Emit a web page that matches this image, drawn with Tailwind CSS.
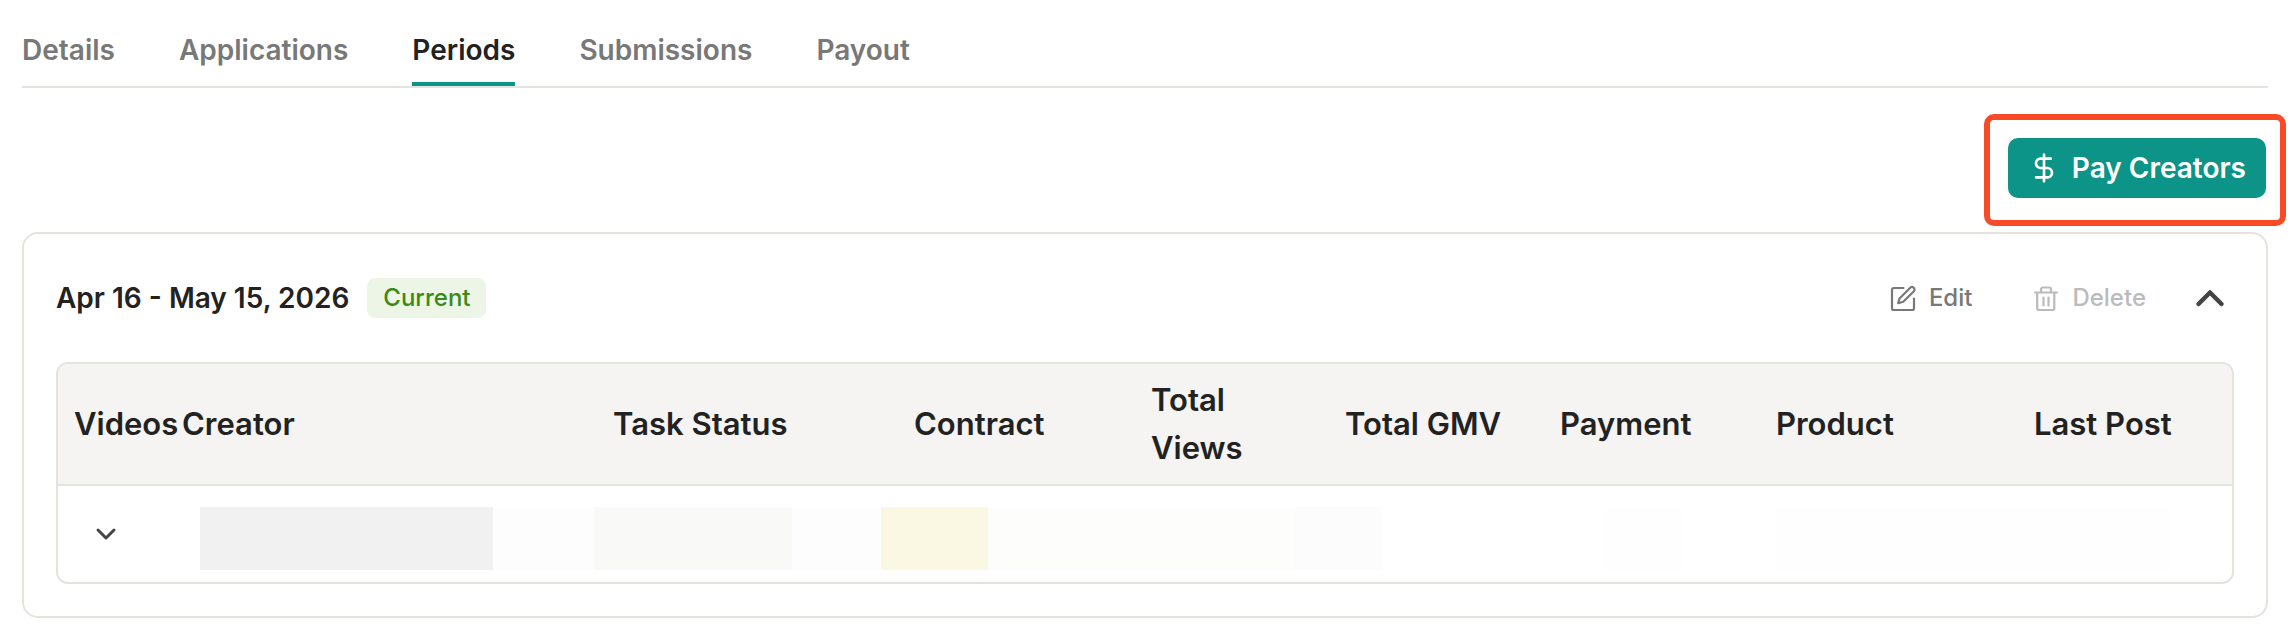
<!DOCTYPE html>
<html lang="en">
  <head>
    <meta charset="UTF-8" />
    <meta name="viewport" content="width=device-width, initial-scale=1.0" />
    <title>Campaign periods</title>
    <script src="https://cdn.jsdelivr.net/npm/@tailwindcss/browser@4"></script>
  </head>
  <body class="bg-white font-['Inter',sans-serif] text-[#222222]">
    <main class="pr-6 pl-[22px]">
      <!-- Tabs -->
      <nav class="flex gap-16 border-b-2 border-[#e4e4df] pt-[30px] text-[28px] leading-10 font-semibold text-[#787878]">
        <a href="#details" class="pb-4">Details</a>
        <a href="#applications" class="pb-4">Applications</a>
        <a href="#periods" aria-current="page" class="border-b-4 border-[#0d9488] pb-3 text-[#222222]">Periods</a>
        <a href="#submissions" class="pb-4">Submissions</a>
        <a href="#payout" class="pb-4">Payout</a>
      </nav>

      <!-- Actions -->
      <div class="flex justify-end pt-[50px] pr-[2px]">
        <div class="relative">
          <button type="button" class="flex h-[60px] items-center gap-3 rounded-[10px] bg-[#0d9488] px-5 text-[28px] font-semibold text-white">
            <svg class="size-8" viewBox="0 0 24 24" fill="none" stroke="currentColor" stroke-width="2" stroke-linecap="round" stroke-linejoin="round" aria-hidden="true">
              <path d="M12 2v20M17 5H9.5a3.5 3.5 0 0 0 0 7h5a3.5 3.5 0 0 1 0 7H6" />
            </svg>
            Pay Creators
          </button>
          <!-- highlight ring -->
          <span class="pointer-events-none absolute -top-6 -right-5 -bottom-7 -left-6 rounded-[10px] border-6 border-[#f84a27]"></span>
        </div>
      </div>

      <!-- Period card -->
      <section class="mt-[34px] rounded-2xl border-2 border-[#e4e4df] px-8 pb-8">
        <div class="flex h-32 items-center">
          <h2 class="text-[28px] font-semibold">Apr 16 - May 15, 2026</h2>
          <span class="ml-[18px] flex h-10 items-center rounded-lg bg-[#edf6e6] px-4 text-2xl font-medium text-[#3b8a12]">Current</span>
          <div class="ml-auto flex items-center text-2xl font-medium">
            <button type="button" class="flex items-center gap-3 text-[#787878]">
              <svg class="size-7" viewBox="0 0 28 28" fill="none" stroke="currentColor" stroke-width="2.2" stroke-linecap="round" stroke-linejoin="round" aria-hidden="true">
                <path d="M14.500 4H4.800A1.800 1.800 0 0 0 3 5.800v18.400A1.800 1.800 0 0 0 4.800 26h18.400a1.800 1.800 0 0 0 1.800-1.800V14.500" />
                <path d="M9.200 19.200 10.500 14.500 21 4a2.450 2.450 0 0 1 3.900 3.200L14.200 17.800Z" />
              </svg>
              Edit
            </button>
            <button type="button" disabled class="ml-[60px] flex items-center gap-3 text-[#bbbbbb]">
              <svg class="size-7" viewBox="0 0 28 28" fill="none" stroke="currentColor" stroke-width="2.2" stroke-linecap="round" stroke-linejoin="round" aria-hidden="true">
                <path d="M3 8.500h22M5.200 8.500v15.700A1.800 1.800 0 0 0 7 26h13.500a1.800 1.800 0 0 0 1.800-1.800V8.500M9 8.500V5.300A1.800 1.800 0 0 1 10.800 3.500h6.400A1.800 1.800 0 0 1 19 5.300v3.200M11.500 13.500v8M16.500 13.500v8" />
              </svg>
              Delete
            </button>
            <button type="button" aria-label="Collapse period" class="mr-2 ml-12 text-[#444444]">
              <svg class="size-8" viewBox="0 0 32 32" fill="none" stroke="currentColor" stroke-width="4.5" stroke-linecap="round" stroke-linejoin="round" aria-hidden="true">
                <path d="M4.500 22 16 10.500 27.500 22" />
              </svg>
            </button>
          </div>
        </div>

        <div class="overflow-hidden rounded-xl border-2 border-[#e4e4df]">
          <table class="w-full table-fixed text-left">
            <colgroup>
              <col class="w-[108px]" />
              <col class="w-[431px]" />
              <col class="w-[301px]" />
              <col class="w-[237px]" />
              <col class="w-[194px]" />
              <col class="w-[215px]" />
              <col class="w-[216px]" />
              <col class="w-[258px]" />
              <col class="w-[214px]" />
            </colgroup>
            <thead class="bg-[#f5f4f2] text-[31px] leading-12">
              <tr class="h-[121px] border-b-2 border-[#e4e4df]">
                <th class="px-4 font-semibold whitespace-nowrap">Videos</th>
                <th class="px-4 font-semibold whitespace-nowrap">Creator</th>
                <th class="px-4 font-semibold whitespace-nowrap">Task Status</th>
                <th class="px-4 font-semibold whitespace-nowrap">Contract</th>
                <th class="px-4 font-semibold">Total<br />Views</th>
                <th class="px-4 font-semibold whitespace-nowrap">Total GMV</th>
                <th class="px-4 font-semibold whitespace-nowrap">Payment</th>
                <th class="px-4 font-semibold whitespace-nowrap">Product</th>
                <th class="px-4 font-semibold whitespace-nowrap">Last Post</th>
              </tr>
            </thead>
            <tbody>
              <tr class="h-[97px]">
                <td class="pr-6">
                  <button type="button" aria-label="Show videos" class="ml-8 flex text-[#444444]">
                    <svg class="size-8" viewBox="0 0 32 32" fill="none" stroke="currentColor" stroke-width="3" stroke-linecap="round" stroke-linejoin="round" aria-hidden="true">
                      <path d="m8 12 8 8 8-8" />
                    </svg>
                  </button>
                </td>
                <!-- Masked creator data -->
                <td colspan="8" class="pt-2 pr-[62px] pl-[34px]">
                  <div class="flex h-[63px]">
                    <div class="grow-[293] basis-0 bg-[#f1f1f1]"></div>
                    <div class="grow-[101] basis-0 bg-[#fdfdfd]"></div>
                    <div class="grow-[198] basis-0 bg-[#f9f9f8]"></div>
                    <div class="grow-[89] basis-0 bg-[#fdfdfd]"></div>
                    <div class="grow-[107] basis-0 bg-[#faf7e3]"></div>
                    <div class="grow-[306] basis-0 bg-[#fdfdfb]"></div>
                    <div class="grow-[88] basis-0 bg-[#fcfcfc]"></div>
                    <div class="grow-[221] basis-0"></div>
                    <div class="grow-[79] basis-0 bg-[#fefefe]"></div>
                    <div class="grow-[93] basis-0"></div>
                    <div class="grow-[395] basis-0 bg-[#fefefe]"></div>
                  </div>
                </td>
              </tr>
            </tbody>
          </table>
        </div>
      </section>
    </main>
  </body>
</html>
